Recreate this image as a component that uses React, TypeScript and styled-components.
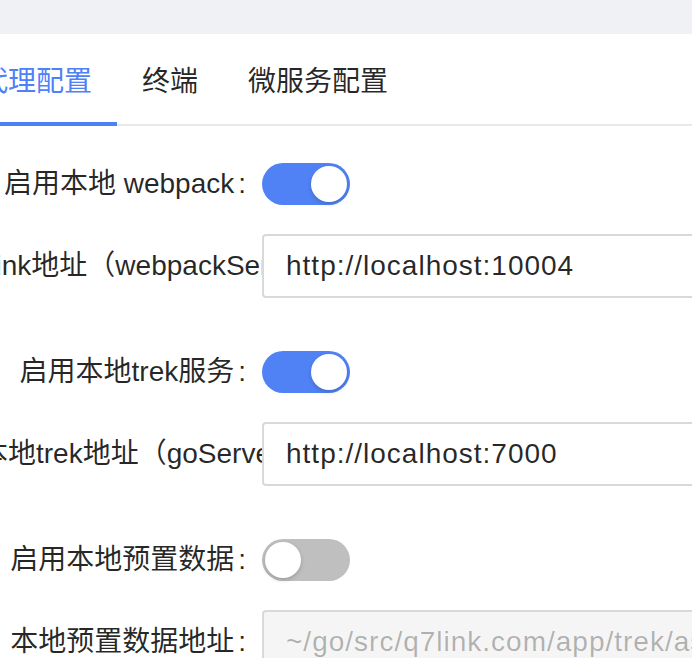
import React from "react";
import styled, { createGlobalStyle } from "styled-components";

type Field =
    | { kind: "switch"; label: string; checked: boolean }
    | { kind: "input"; label: string; value: string; disabled?: boolean };

const groups: Field[][] = [
    [
        { kind: "switch", label: "启用本地 webpack", checked: true },
        { kind: "input", label: "Link地址（webpackServer）", value: "http://localhost:10004" },
    ],
    [
        { kind: "switch", label: "启用本地trek服务", checked: true },
        { kind: "input", label: "本地trek地址（goServer）", value: "http://localhost:7000" },
    ],
    [
        { kind: "switch", label: "启用本地预置数据", checked: false },
        { kind: "input", label: "本地预置数据地址", value: "~/go/src/q7link.com/app/trek/assets", disabled: true },
    ],
];

const tabs = ["代理配置", "终端", "微服务配置"];

const App: React.FC = () => {
    return (
        <>
            <GlobalStyle />
            <TopBar />
            <Panel>
                <TabBar>
                    {tabs.map((t, i) => (
                        <Tab key={t} active={i === 0}>{t}</Tab>
                    ))}
                </TabBar>
                <Form>
                    {groups.map((g, gi) => (
                        <Group key={gi}>
                            {g.map((f) => (
                                <Row key={f.label}>
                                    <Label>{f.label}</Label>
                                    {f.kind === "switch" ? (
                                        <Switch checked={f.checked} type="button">
                                            <Knob />
                                        </Switch>
                                    ) : (
                                        <Input readOnly value={f.value} disabled={f.disabled} />
                                    )}
                                </Row>
                            ))}
                        </Group>
                    ))}
                </Form>
            </Panel>
        </>
    );
};

const GlobalStyle = createGlobalStyle`
    html, body {
        margin: 0;
        padding: 0;
        background: #ffffff;
        overflow: hidden;
    }
    body {
        font-family: "Liberation Sans", "Noto Sans CJK SC", sans-serif;
        color: rgba(0, 0, 0, 0.85);
    }
`;

const TopBar = styled.div`
    height: 34px;
    background: #f0f1f4;
`;

const Panel = styled.div`
    width: 780px;
    margin-left: -20px;
`;

const TabBar = styled.div`
    display: flex;
    height: 90px;
    margin-left: -25px;
    border-bottom: 2px solid #e8e8e8;
`;

const Tab = styled.div<{ active?: boolean }>`
    position: relative;
    display: flex;
    align-items: center;
    padding: 0 25px;
    font-size: 28px;
    color: ${(p) => (p.active ? "#4e80f7" : "rgba(0, 0, 0, 0.85)")};

    &::after {
        content: "";
        display: ${(p) => (p.active ? "block" : "none")};
        position: absolute;
        left: 0;
        right: 0;
        bottom: -2px;
        height: 4px;
        background: #4e80f7;
    }
`;

const Form = styled.div`
    display: flex;
    flex-direction: column;
    gap: 42px;
    padding-top: 26px;
`;

const Group = styled.div`
    display: flex;
    flex-direction: column;
    gap: 18px;
`;

const Row = styled.div`
    display: flex;
    align-items: center;
    height: 64px;
`;

const Label = styled.label`
    flex: none;
    width: 282px;
    overflow: hidden;
    white-space: nowrap;
    text-align: right;
    font-size: 28px;
    line-height: 64px;

    &::after {
        content: ":";
        margin: 0 16px 0 4px;
    }
`;

const Switch = styled.button<{ checked: boolean }>`
    display: flex;
    justify-content: ${(p) => (p.checked ? "flex-end" : "flex-start")};
    align-items: center;
    box-sizing: border-box;
    width: 88px;
    height: 42px;
    padding: 3px;
    border: none;
    border-radius: 21px;
    background: ${(p) => (p.checked ? "#5082f6" : "#bfbfbf")};
`;

const Knob = styled.span`
    width: 36px;
    height: 36px;
    border-radius: 50%;
    background: #ffffff;
    box-shadow: 0 2px 4px rgba(0, 35, 11, 0.2);
`;

const Input = styled.input`
    box-sizing: border-box;
    width: 480px;
    height: 64px;
    padding: 0 22px;
    border: 2px solid #d9d9d9;
    border-radius: 4px;
    font-family: inherit;
    font-size: 28px;
    letter-spacing: 1px;
    color: rgba(0, 0, 0, 0.85);
    background: #ffffff;
    outline: none;

    &:disabled {
        background: #f5f5f5;
        color: rgba(0, 0, 0, 0.28);
    }
`;

export default App;
